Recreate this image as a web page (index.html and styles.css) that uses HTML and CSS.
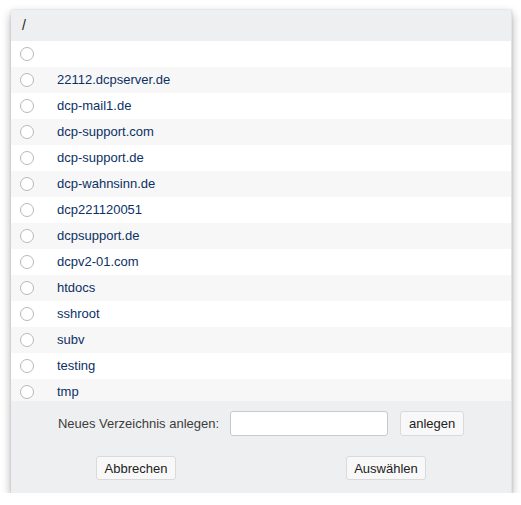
FILE: index.html
```html
<!DOCTYPE html>
<html>
<head>
<meta charset="utf-8">
<link rel="stylesheet" href="styles.css">
</head>
<body>
<div class="page">
  <div class="dialog">
    <div class="header">/</div>
    <div class="list">
      <div class="row"><span class="radio"></span><span class="name"></span></div>
      <div class="row"><span class="radio"></span><span class="name">22112.dcpserver.de</span></div>
      <div class="row"><span class="radio"></span><span class="name">dcp-mail1.de</span></div>
      <div class="row"><span class="radio"></span><span class="name">dcp-support.com</span></div>
      <div class="row"><span class="radio"></span><span class="name">dcp-support.de</span></div>
      <div class="row"><span class="radio"></span><span class="name">dcp-wahnsinn.de</span></div>
      <div class="row"><span class="radio"></span><span class="name">dcp221120051</span></div>
      <div class="row"><span class="radio"></span><span class="name">dcpsupport.de</span></div>
      <div class="row"><span class="radio"></span><span class="name">dcpv2-01.com</span></div>
      <div class="row"><span class="radio"></span><span class="name">htdocs</span></div>
      <div class="row"><span class="radio"></span><span class="name">sshroot</span></div>
      <div class="row"><span class="radio"></span><span class="name">subv</span></div>
      <div class="row"><span class="radio"></span><span class="name">testing</span></div>
      <div class="row"><span class="radio"></span><span class="name">tmp</span></div>
    </div>
    <div class="footer">
      <div class="create">
        <span class="label">Neues Verzeichnis anlegen:</span>
        <input class="field" type="text">
        <button class="btn">anlegen</button>
      </div>
      <div class="actions">
        <div class="half"><button class="btn wide">Abbrechen</button></div>
        <div class="half"><button class="btn wide">Auswählen</button></div>
      </div>
    </div>
  </div>
</div>
</body>
</html>
```

FILE: styles.css
```css
* { box-sizing: border-box; }
html, body { margin: 0; padding: 0; background: #fff; }
body { font-family: "Liberation Sans", Arial, sans-serif; font-size: 13px; color: #333; }
.page { padding: 10px 0 0 11px; }
.dialog {
  width: 501px;
  background: #eeeff1;
  box-shadow: 0 4px 9px rgba(0,0,0,0.32), 0 0 2px rgba(0,0,0,0.12);
  border-right: 1px solid #e2e3e5;
}
.header {
  height: 31px;
  display: flex;
  align-items: center;
  padding-left: 11px;
  padding-bottom: 1px;
  font-size: 14px;
  color: #222;
}
.list { height: 360px; overflow: hidden; }
.row {
  height: 26px;
  display: flex;
  align-items: center;
  background: #fff;
}
.row:nth-child(even) { background: #f7f7f7; }
.radio {
  width: 14px;
  height: 14px;
  border-radius: 50%;
  border: 1px solid #b8b8b8;
  background: #fff;
  margin-left: 9px;
  flex: none;
}
.name { margin-left: 23px; margin-bottom: 1px; color: #0c3165; }
.footer { padding: 10px 0 13px; }
.create {
  display: flex;
  justify-content: center;
  align-items: center;
  height: 25px;
}
.label { color: #3d3d3d; margin-right: 11px; }
.field {
  width: 158px;
  height: 25px;
  border: 1px solid #c9c9c9;
  border-radius: 3px;
  background: #fff;
  margin: 0 12px 0 0;
  padding: 0 4px;
}
.btn {
  height: 25px;
  padding: 0 9px;
  font-family: "Liberation Sans", Arial, sans-serif;
  font-size: 13px;
  color: #222;
  background: #f8f8f8;
  border: 1px solid #dadada;
  border-radius: 3px;
}
.actions { display: flex; margin-top: 20px; }
.half { flex: 1; display: flex; justify-content: center; }
.wide { width: 80px; height: 24px; padding: 0; }
.create .btn { width: 64px; padding: 0; }
```
